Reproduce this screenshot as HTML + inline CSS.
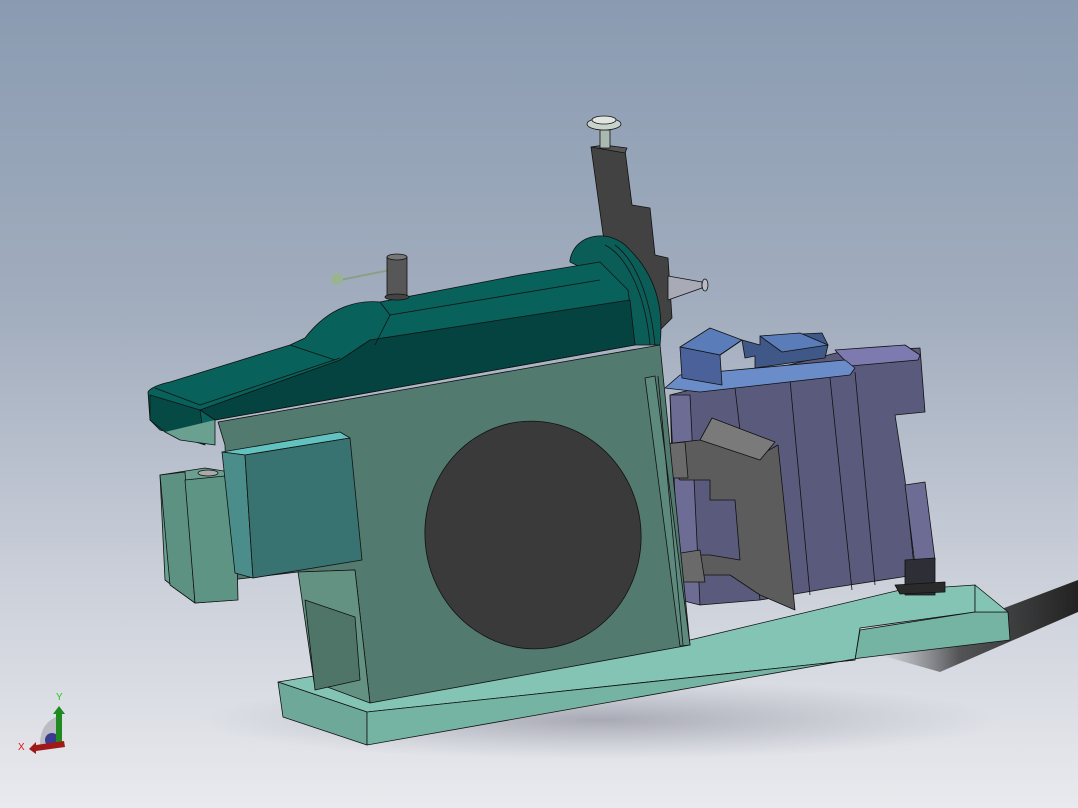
<!DOCTYPE html>
<html><head><meta charset="utf-8"><style>
html,body{margin:0;padding:0;width:1078px;height:808px;overflow:hidden}
body{background:linear-gradient(180deg,#8a9bb1 0%,#a3aebf 40%,#c9ced8 70%,#e9eaee 100%)}
svg{position:absolute;left:0;top:0}
</style></head><body>
<svg width="1078" height="808" viewBox="0 0 1078 808" stroke="#111" stroke-width="0.8" stroke-linejoin="round">
<defs>
<linearGradient id="sh" x1="0" y1="0" x2="1" y2="0"><stop offset="0" stop-color="#555" stop-opacity="0"/><stop offset="0.4" stop-color="#333" stop-opacity="0.8"/><stop offset="1" stop-color="#222"/></linearGradient>
<radialGradient id="bs" cx="0.5" cy="0.5" r="0.5"><stop offset="0" stop-color="#667" stop-opacity="0.45"/><stop offset="1" stop-color="#889" stop-opacity="0"/></radialGradient>
</defs>
<ellipse cx="600" cy="720" rx="400" ry="40" fill="url(#bs)" stroke="none"/>
<polygon points="880,655 1078,580 1078,612 940,672" fill="url(#sh)" stroke="none"/>
<!-- base plate -->
<polygon points="278,682 350,670 690,640 900,590 975,585 975,612 860,628 855,660 367,712" fill="#84c4b4"/>
<polygon points="278,682 367,712 367,745 283,717" fill="#6ea898"/>
<polygon points="367,712 855,660 860,630 975,612 1008,612 1010,640 860,658 367,745" fill="#75b3a3"/>
<polygon points="975,585 1008,612 975,612" fill="#84c4b4"/>
<!-- purple block -->
<polygon points="670,395 840,352 920,348 925,412 895,415 905,480 915,575 830,588 760,600 700,605 675,560" fill="#5a5a7c"/>
<polygon points="670,395 690,395 700,605 680,600" fill="#6c6c95"/>
<line x1="735" y1="388" x2="760" y2="600"/><line x1="790" y1="380" x2="810" y2="595"/><line x1="830" y1="378" x2="852" y2="590"/><line x1="855" y1="372" x2="875" y2="585"/>
<polygon points="835,350 905,345 920,355 918,360 850,366" fill="#7d7ab0"/>
<polygon points="905,485 925,482 935,560 915,565" fill="#6c6c95"/>
<polygon points="905,560 935,558 935,595 905,595" fill="#2e2e36"/>
<polygon points="895,585 945,582 945,592 900,594" fill="#2a2a2a"/>
<!-- vise -->
<polygon points="665,388 680,375 845,360 855,368 850,375 700,392" fill="#6a8cc8"/>
<polygon points="680,347 710,328 742,340 720,355" fill="#5a7cb8"/>
<polygon points="680,347 720,355 722,385 682,378" fill="#4a6299"/>
<polygon points="720,355 742,340 745,358 755,356 755,368 825,358 828,345 822,333 760,336 760,345 742,340" fill="#3f5888"/>
<polygon points="760,336 800,333 828,345 782,352" fill="#5a7cb8"/>
<!-- gray bracket -->
<polygon points="655,445 700,440 760,455 778,445 795,610 760,595 730,575 680,575 672,555 710,555 740,560 735,500 710,500 710,480 680,480 672,470" fill="#5c5c5c"/>
<polygon points="700,440 712,418 775,442 760,460" fill="#7a7a7a"/>
<polygon points="655,445 685,442 688,478 660,478" fill="#6a6a6a"/>
<polygon points="668,555 700,550 705,582 672,582" fill="#6a6a6a"/>
<!-- vertical slide -->
<polygon points="591,147 625,150 632,205 650,208 655,255 668,258 672,318 660,330 615,320" fill="#424242"/>
<polygon points="591,147 604,145 627,148 625,153" fill="#555"/>
<rect x="600" y="130" width="10" height="18" fill="#a9b9b0"/>
<ellipse cx="604" cy="124" rx="17" ry="6" fill="#c9d3cc"/>
<ellipse cx="604" cy="120" rx="12" ry="4" fill="#dfe5e0"/>
<polygon points="668,276 702,282 702,288 668,300" fill="#a8aab5"/>
<ellipse cx="705" cy="285" rx="3" ry="6" fill="#b8bac4"/>
<!-- flange -->
<path d="M570,260 C575,232 612,228 630,250 C650,270 665,300 660,345 L630,345 C620,310 600,275 570,262Z" fill="#0b5d58"/>
<path d="M605,245 C625,255 645,290 650,345" fill="none"/>
<path d="M615,245 C635,260 650,295 655,345" fill="none"/>
<!-- ram -->
<path d="M148,392 C150,388 160,384 170,382 L290,345 L305,338 C330,305 360,300 380,302 L520,275 L600,262 L628,290 L635,345 L215,420 L205,425 L200,440 L160,430 L150,420Z" fill="#08615b"/>
<path d="M150,395 L200,410 L205,445 L165,432 L150,420Z" fill="#064a46"/>
<path d="M200,410 L340,360 L370,340 L630,300 L635,345 L215,420Z" fill="#044340"/>
<path d="M155,388 L200,405 L340,358 M290,345 L335,360 M380,302 L390,315 L375,345 M390,315 L600,280" fill="none"/>
<path d="M165,432 L180,440 L215,445 L215,420" fill="#6aa090"/>
<!-- lever -->
<line x1="340" y1="280" x2="390" y2="270" stroke="#8aa085" stroke-width="2"/>
<circle cx="337" cy="279" r="6" fill="#9ab492" stroke="none"/>
<rect x="387" y="257" width="20" height="40" fill="#575757"/>
<ellipse cx="397" cy="257" rx="10" ry="3" fill="#777"/>
<ellipse cx="397" cy="297" rx="12" ry="3" fill="#444"/>
<!-- main body -->
<polygon points="218,422 660,345 690,645 370,703 355,570 298,572 230,580 225,445" fill="#527a6e"/>
<polygon points="298,572 355,570 370,703 314,682" fill="#639283"/>
<polygon points="305,600 355,617 360,680 315,690" fill="#4e7568"/>
<polygon points="645,378 655,376 690,645 680,646" fill="#5d8a7d"/>
<line x1="658" y1="376" x2="683" y2="645"/>
<!-- left blocks -->
<polygon points="160,475 205,468 230,472 235,600 195,603 165,580" fill="#6aa090"/>
<polygon points="160,475 185,472 195,603 170,585" fill="#5d9282"/>
<polygon points="185,480 235,475 238,600 195,603" fill="#5e9484"/>
<ellipse cx="208" cy="473" rx="10" ry="3" fill="#aaa"/>
<!-- teal box -->
<polygon points="222,452 340,432 350,438 245,455" fill="#61c2c0"/>
<polygon points="222,452 245,455 253,578 235,573" fill="#4a8d8a"/>
<polygon points="245,455 350,438 362,560 253,578" fill="#387371"/>
<!-- disk -->
<ellipse cx="533" cy="535" rx="108" ry="114" fill="#3a3a3a" transform="rotate(-8 533 535)"/>
<!-- triad -->
<path d="M40,745 C40,728 48,720 58,716 L58,745Z" fill="#bbbcc4" stroke="none"/>
<circle cx="52" cy="740" r="7" fill="#3b3b8c" stroke="none"/>
<rect x="56" y="714" width="6" height="30" fill="#1f8a1f" stroke="none"/>
<polygon points="53,714 65,714 59,706" fill="#1f8a1f" stroke="none"/>
<polygon points="36,745 64,741 65,747 36,751" fill="#a01818" stroke="none"/>
<polygon points="36,742 36,754 29,749" fill="#a01818" stroke="none"/>
<text x="56" y="700" fill="#1fcc1f" stroke="none" font-family="Liberation Sans, sans-serif" font-size="10">Y</text>
<text x="18" y="750" fill="#e01010" stroke="none" font-family="Liberation Sans, sans-serif" font-size="10">X</text>
<text x="47" y="742" fill="#3a3ab0" stroke="none" font-family="Liberation Sans, sans-serif" font-size="9">Z</text>
</svg>
</body></html>
